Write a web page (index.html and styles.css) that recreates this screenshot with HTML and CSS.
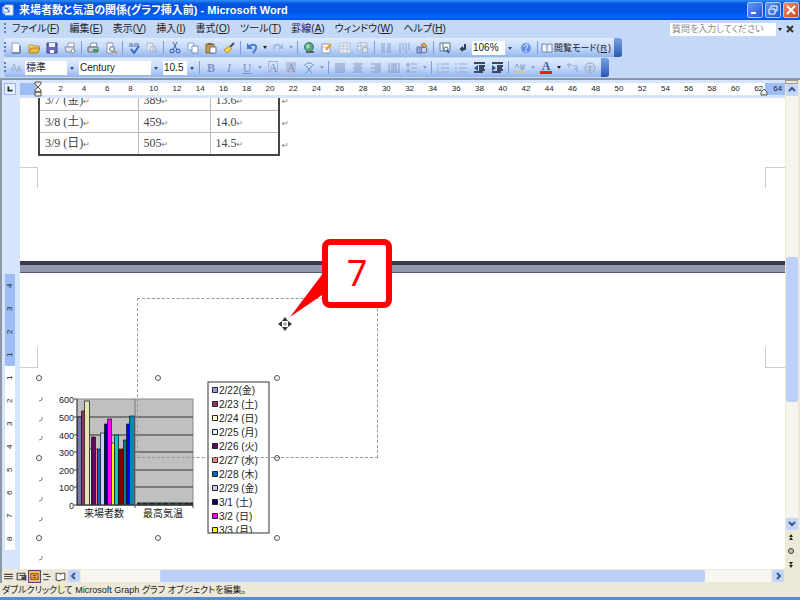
FILE: index.html
```html
<!DOCTYPE html>
<html lang="ja">
<head>
<meta charset="utf-8">
<title>来場者数と気温の関係(グラフ挿入前) - Microsoft Word</title>
<link rel="stylesheet" href="styles.css">
</head>
<body>
<svg class="sprite" aria-hidden="true">
  <symbol id="new" viewBox="0 0 12 12"><path d="M2 1h6l2 2v8H2z" fill="#fff" stroke="#8aa0cc"/><path d="M2 11h8V4" fill="none" stroke="#3d558e"/></symbol>
  <symbol id="open" viewBox="0 0 12 12"><path d="M1 10V3h4l1 1h5v2" fill="#f8d878" stroke="#b89030"/><path d="M1 11l2-5h9l-2 5z" fill="#f0bc40" stroke="#b08020"/></symbol>
  <symbol id="save" viewBox="0 0 12 12"><path d="M1 1h10v10H1z" fill="#6868c0" stroke="#40408c"/><path d="M3 1h6v4H3z" fill="#e8ecff"/><path d="M4 8h4v3H4z" fill="#fff"/></symbol>
  <symbol id="perm" viewBox="0 0 12 12"><path d="M4 1h6v4H4z" fill="#fff" stroke="#9098b0"/><path d="M1 5h9l1 5H2z" fill="#e4e6ee" stroke="#858ca4"/><circle cx="9" cy="9" r="2" fill="#f4f4fa" stroke="#858ca4"/></symbol>
  <symbol id="print" viewBox="0 0 12 12"><path d="M4 1h6l-1 4H3z" fill="#fff" stroke="#8088a0"/><path d="M1 5h10v5H1z" fill="#c8ccd8" stroke="#636b83"/><path d="M6 7h5v3H6z" fill="#38a048"/></symbol>
  <symbol id="preview" viewBox="0 0 12 12"><path d="M2 1h6v10H2z" fill="#fff" stroke="#8494b8"/><circle cx="7" cy="7" r="2.5" fill="#d8ecf8" stroke="#69758c"/><path d="M9 9l3 2" stroke="#c89038" stroke-width="2"/></symbol>
  <symbol id="spell" viewBox="0 0 12 12"><path d="M1 2h4M6 2h5M1 4h10" stroke="#5070a8"/><path d="M3 7l3 4 5-7" fill="none" stroke="#3868c0" stroke-width="2"/></symbol>
  <symbol id="research" viewBox="0 0 12 12"><path d="M1 1h6v8H1z" fill="#e4e9f3" stroke="#b0bcd0"/><circle cx="7" cy="7" r="3" fill="none" stroke="#a8b4c8"/><path d="M9 9l2 2" stroke="#a8b4c8" stroke-width="2"/></symbol>
  <symbol id="cut" viewBox="0 0 12 12"><path d="M4 0l4 8M8 0L4 8" stroke="#4464a4"/><circle cx="3" cy="9" r="2" fill="none" stroke="#3058a8"/><circle cx="9" cy="9" r="2" fill="none" stroke="#3058a8"/></symbol>
  <symbol id="copy" viewBox="0 0 12 12"><path d="M1 1h6v7H1z" fill="#f4f8ff" stroke="#87a1d0"/><path d="M5 4h6v7H5z" fill="#fff" stroke="#7090c4"/></symbol>
  <symbol id="paste" viewBox="0 0 12 12"><path d="M1 2h8v9H1z" fill="#d0983c" stroke="#8c6428"/><path d="M3 1h4v2H3z" fill="#666"/><path d="M5 5h6v6H5z" fill="#fff" stroke="#6078b0"/></symbol>
  <symbol id="brush" viewBox="0 0 12 12"><path d="M7 5l4-4" stroke="#484878" stroke-width="2"/><path d="M1 8l5-4 3 3-5 4z" fill="#f4d848" stroke="#bc9830"/></symbol>
  <symbol id="undo" viewBox="0 0 12 12"><path d="M3 5c3-4 8-2 7 1 0 2-2 3-3 5" fill="none" stroke="#4478cc" stroke-width="2"/><path d="M1 1v6h6z" fill="#4478cc"/></symbol>
  <symbol id="redo" viewBox="0 0 12 12"><path d="M9 5C6 1 1 3 2 7" fill="none" stroke="#a6b8d8" stroke-width="2"/><path d="M11 2v5H6z" fill="#a6b8d8"/></symbol>
  <symbol id="link" viewBox="0 0 12 12"><circle cx="6" cy="5" r="4.5" fill="#58a878" stroke="#357a80"/><path d="M3 3l3-1 1 3-3 2z" fill="#a8dcb0"/><path d="M3 10h4M6 10h5" stroke="#59616f" stroke-width="2"/></symbol>
  <symbol id="tables" viewBox="0 0 12 12"><path d="M1 2h8v9H1z" fill="#fff" stroke="#8497bb"/><path d="M1 5h8" stroke="#e0b050"/><path d="M5 8l5-6" stroke="#e0a030" stroke-width="2"/></symbol>
  <symbol id="table" viewBox="0 0 12 12"><path d="M1 1h10v10H1zM1 4h10M1 7h10M4 1v10M8 1v10" fill="#edf1f8" stroke="#b9c4d6"/></symbol>
  <symbol id="excel" viewBox="0 0 12 12"><path d="M1 1h9v7H1zM1 4h9M4 1v7" fill="#f2f5fa" stroke="#a8b5ca"/><circle cx="8" cy="8" r="3" fill="#d8dfe8" stroke="#9caabb"/></symbol>
  <symbol id="columns" viewBox="0 0 12 12"><path d="M1 2h4M1 4h4M1 6h4M1 8h4M1 10h4M7 2h4M7 4h4M7 6h4M7 8h4M7 10h4" stroke="#879fca"/></symbol>
  <symbol id="textdir" viewBox="0 0 12 12"><path d="M2 1v10M5 1v7M8 1v10M11 1v7" stroke="#8da2c8"/></symbol>
  <symbol id="draw" viewBox="0 0 12 12"><path d="M1 5h5v6H1z" fill="#8ea4dc" stroke="#6074aa"/><path d="M5 3l3-2 3 3-2 2z" fill="#f1b448" stroke="#8c703c"/><circle cx="8" cy="8" r="3" fill="#c8cfe6" stroke="#526796"/></symbol>
  <symbol id="map" viewBox="0 0 12 12"><path d="M1 1h10v8H1zM4 1v8" fill="#f8f6d8" stroke="#5278b8"/><circle cx="7" cy="7" r="2" fill="#fff" stroke="#3b62a3"/><path d="M8 8l2 3" stroke="#3b62a3" stroke-width="2"/></symbol>
  <symbol id="mark" viewBox="0 0 12 12"><path d="M8 2v5H4M6 5L4 7l2 2" fill="none" stroke="#333f57" stroke-width="2"/></symbol>
  <symbol id="help" viewBox="0 0 12 12"><circle cx="6" cy="6" r="5" fill="#5c8fe4" stroke="#98b8ee"/><path d="M4 5c0-3 4-3 4-1 0 1-2 1-2 3M6 8v2" fill="none" stroke="#fff"/></symbol>
  <symbol id="book" viewBox="0 0 12 12"><path d="M1 2h4l1 1 1-1h4v8H7l-1 1-1-1H1zM6 3v8" fill="#edf3fd" stroke="#7389b4"/></symbol>
  <symbol id="styles" viewBox="0 0 12 12"><path d="M1 9l3-7 3 7M2 7h4M7 10l2-6 2 6M8 8h3" fill="none" stroke="#9dafd0"/></symbol>
  <symbol id="scale" viewBox="0 0 12 12"><path d="M1 4c3-4 7-4 10 0M3 11l6-7M9 11L3 4" fill="none" stroke="#638ac8"/></symbol>
  <symbol id="just" viewBox="0 0 12 12"><path d="M1 2h10M1 4h10M1 6h10M1 8h10M1 10h10" stroke="#8299c5"/></symbol>
  <symbol id="center" viewBox="0 0 12 12"><path d="M1 2h10M3 4h6M1 6h10M3 8h6M1 10h10" stroke="#8299c5"/></symbol>
  <symbol id="right" viewBox="0 0 12 12"><path d="M1 2h10M5 4h6M1 6h10M5 8h6M1 10h10" stroke="#8299c5"/></symbol>
  <symbol id="dist" viewBox="0 0 12 12"><path d="M1 1v10M11 1v10M3 2h6M3 4h6M3 6h6M3 8h6M1 10h10" stroke="#8299c5"/></symbol>
  <symbol id="spacing" viewBox="0 0 12 12"><path d="M5 2h6M5 6h6M5 10h6M2 2v8M0 4l2-3 2 3M0 8l2 3 2-3" fill="none" stroke="#8ba1cb"/></symbol>
  <symbol id="numlist" viewBox="0 0 12 12"><path d="M1 1v3M1 5v3M1 9v3M4 2h8M4 6h8M4 10h8" stroke="#93a7cc"/></symbol>
  <symbol id="bullets" viewBox="0 0 12 12"><path d="M0 2h2M0 6h2M0 10h2M4 2h8M4 6h8M4 10h8" stroke="#93a7cc"/></symbol>
  <symbol id="outdent" viewBox="0 0 12 12"><path d="M1 1h11M6 4h6M6 6h5M6 8h6M1 10h9" stroke="#3d4862" stroke-width="2"/><path d="M5 3v6L1 6z" fill="#344f87"/></symbol>
  <symbol id="indent" viewBox="0 0 12 12"><path d="M1 1h11M6 4h6M6 6h5M6 8h6M1 10h9" stroke="#3d4862" stroke-width="2"/><path d="M1 3v6l4-3z" fill="#344f87"/></symbol>
  <symbol id="hilite" viewBox="0 0 12 12"><path d="M1 6l2-4 2 4M7 2v5h3V4H7M7 8l4-6" fill="none" stroke="#8ca0c4"/><path d="M0 9h12v2H0z" fill="#cec89c"/></symbol>
  <symbol id="ruby" viewBox="0 0 12 12"><path d="M1 3h5M3 1v5M7 4h4v6M8 7h3" fill="none" stroke="#98a9c8"/></symbol>
  <symbol id="enclose" viewBox="0 0 12 12"><circle cx="6" cy="6" r="5" fill="none" stroke="#98a7c0"/><path d="M3 5h6M6 3v7M4 8h4" stroke="#98a7c0"/></symbol>
</svg>
<div class="app">
  <header class="titlebar">
    <svg class="logo" viewBox="0 0 12 12" aria-hidden="true"><path d="M3 1h8v10H3z" fill="#fff" stroke="#a8c4f4"/><path d="M1 3h7v6H1z" fill="#3868c8" stroke="#fff"/><path d="M2 4l1 4 1-3 1 3 2-4" fill="none" stroke="#fff"/></svg>
    <h1>来場者数と気温の関係(グラフ挿入前) - Microsoft Word</h1>
    <div class="window-buttons">
      <button aria-label="最小化"><svg viewBox="0 0 12 12"><path d="M2 9h5" stroke="#fff" stroke-width="2"/></svg></button>
      <button aria-label="元に戻す"><svg viewBox="0 0 12 12"><path d="M4 4V2h6v5H8M2 5h6v5H2z" fill="none" stroke="#fff"/></svg></button>
      <button class="close" aria-label="閉じる"><svg viewBox="0 0 12 12"><path d="M2 2l8 8M10 2l-8 8" stroke="#fff" stroke-width="2"/></svg></button>
    </div>
  </header>

  <nav class="menubar">
    <span class="grip"></span>
    <button>ファイル(<u>F</u>)</button><button>編集(<u>E</u>)</button><button>表示(<u>V</u>)</button><button>挿入(<u>I</u>)</button><button>書式(<u>O</u>)</button><button>ツール(<u>T</u>)</button><button>罫線(<u>A</u>)</button><button>ウィンドウ(<u>W</u>)</button><button>ヘルプ(<u>H</u>)</button>
    <input class="question" type="text" aria-label="質問" placeholder="質問を入力してください">
    <button class="drop" aria-label="質問の履歴"></button>
    <button class="doc-close" aria-label="文書を閉じる"><svg viewBox="0 0 12 12"><path d="M3 3l6 6M9 3l-6 6" stroke="#333" stroke-width="2"/></svg></button>
  </nav>

  <div class="toolbar-row">
    <div class="toolbar">
      <span class="grip"></span>
      <button class="tool" aria-label="新規作成"><svg><use href="#new"/></svg></button>
      <button class="tool" aria-label="開く"><svg><use href="#open"/></svg></button>
      <button class="tool" aria-label="保存"><svg><use href="#save"/></svg></button>
      <button class="tool" aria-label="アクセス許可"><svg><use href="#perm"/></svg></button>
      <span class="sep"></span>
      <button class="tool" aria-label="印刷"><svg><use href="#print"/></svg></button>
      <button class="tool" aria-label="印刷プレビュー"><svg><use href="#preview"/></svg></button>
      <span class="sep"></span>
      <button class="tool" aria-label="文章校正"><svg><use href="#spell"/></svg></button>
      <button class="tool" aria-label="リサーチ"><svg><use href="#research"/></svg></button>
      <span class="sep"></span>
      <button class="tool" aria-label="切り取り"><svg><use href="#cut"/></svg></button>
      <button class="tool" aria-label="コピー"><svg><use href="#copy"/></svg></button>
      <button class="tool" aria-label="貼り付け"><svg><use href="#paste"/></svg></button>
      <button class="tool" aria-label="書式のコピー"><svg><use href="#brush"/></svg></button>
      <span class="sep"></span>
      <button class="tool" aria-label="元に戻す"><svg><use href="#undo"/></svg></button>
      <button class="drop" aria-label="元に戻す一覧"></button>
      <button class="tool" aria-label="やり直し"><svg><use href="#redo"/></svg></button>
      <button class="drop dim" aria-label="やり直し一覧"></button>
      <span class="sep"></span>
      <button class="tool" aria-label="ハイパーリンク"><svg><use href="#link"/></svg></button>
      <button class="tool" aria-label="罫線"><svg><use href="#tables"/></svg></button>
      <button class="tool" aria-label="表の挿入"><svg><use href="#table"/></svg></button>
      <button class="tool" aria-label="Excelワークシート"><svg><use href="#excel"/></svg></button>
      <span class="sep"></span>
      <button class="tool" aria-label="段組み"><svg><use href="#columns"/></svg></button>
      <button class="tool" aria-label="縦書き"><svg><use href="#textdir"/></svg></button>
      <button class="tool" aria-label="図形描画"><svg><use href="#draw"/></svg></button>
      <span class="sep"></span>
      <button class="tool" aria-label="見出しマップ"><svg><use href="#map"/></svg></button>
      <button class="tool" aria-label="編集記号"><svg><use href="#mark"/></svg></button>
      <span class="combo zoom"><select aria-label="ズーム"><option>106%</option></select></span>
      <button class="tool" aria-label="ヘルプ"><svg><use href="#help"/></svg></button>
      <span class="sep"></span>
      <button class="reading"><svg><use href="#book"/></svg>閲覧モード(<u>R</u>)</button>
      <span class="cap"></span>
    </div>
  </div>

  <div class="toolbar-row">
    <div class="toolbar">
      <span class="grip"></span>
      <button class="tool" aria-label="スタイルと書式"><svg><use href="#styles"/></svg></button>
      <span class="combo style"><select aria-label="スタイル"><option>標準</option></select></span>
      <span class="combo font"><select aria-label="フォント"><option>Century</option></select></span>
      <span class="combo size"><select aria-label="フォントサイズ"><option>10.5</option></select></span>
      <span class="sep"></span>
      <button class="tool glyph"><b>B</b></button>
      <button class="tool glyph"><i>I</i></button>
      <button class="tool glyph"><u>U</u></button>
      <button class="drop dim" aria-label="下線の種類"></button>
      <button class="tool glyph boxed"><span>A</span></button>
      <button class="tool glyph shaded"><span>A</span></button>
      <button class="tool" aria-label="文字の拡大縮小"><svg><use href="#scale"/></svg></button>
      <button class="drop dim" aria-label="倍率"></button>
      <span class="sep"></span>
      <button class="tool" aria-label="両端揃え"><svg><use href="#just"/></svg></button>
      <button class="tool" aria-label="中央揃え"><svg><use href="#center"/></svg></button>
      <button class="tool" aria-label="右揃え"><svg><use href="#right"/></svg></button>
      <button class="tool" aria-label="均等割り付け"><svg><use href="#dist"/></svg></button>
      <button class="tool" aria-label="行間"><svg><use href="#spacing"/></svg></button>
      <button class="drop dim" aria-label="行間の一覧"></button>
      <span class="sep"></span>
      <button class="tool" aria-label="段落番号"><svg><use href="#numlist"/></svg></button>
      <button class="tool" aria-label="箇条書き"><svg><use href="#bullets"/></svg></button>
      <button class="tool" aria-label="インデント解除"><svg><use href="#outdent"/></svg></button>
      <button class="tool" aria-label="インデント"><svg><use href="#indent"/></svg></button>
      <span class="sep"></span>
      <button class="tool" aria-label="蛍光ペン"><svg><use href="#hilite"/></svg></button>
      <button class="drop dim" aria-label="蛍光ペンの色"></button>
      <button class="tool glyph color"><span>A</span></button>
      <button class="drop" aria-label="フォントの色一覧"></button>
      <button class="tool" aria-label="ルビ"><svg><use href="#ruby"/></svg></button>
      <button class="tool" aria-label="囲い文字"><svg><use href="#enclose"/></svg></button>
      <span class="cap"></span>
    </div>
  </div>

  <div class="workspace">
    <div class="editor">
      <div class="ruler">
        <button class="tabstop" aria-label="タブの種類"><svg viewBox="0 0 12 12"><path d="M4 3v5h5" fill="none" stroke="#222" stroke-width="2"/></svg></button>
        <div class="ruler-track">
          <svg class="indent-mark" viewBox="0 0 8 16" aria-hidden="true"><path d="M1 1h6v2L4 6 1 3zM4 6l3 3v2H1V9zM1 11h6v4H1z" fill="#f1eee0" stroke="#555"/></svg>
          <span>2</span><span>4</span><span>6</span><span>8</span><span>10</span><span>12</span><span>14</span><span>16</span><span>18</span><span>20</span><span>22</span><span>24</span><span>26</span><span>28</span><span>30</span><span>32</span><span>34</span><span>36</span><span>38</span><span>40</span><span>42</span><span>44</span><span>46</span><span>48</span><span>50</span><span>52</span><span>54</span><span>56</span><span>58</span><span>60</span><span>62</span><span class="last">64</span>
          <svg class="right-mark" viewBox="0 0 8 8" aria-hidden="true"><path d="M4 1l3 3v3H1V4z" fill="#f1eee0" stroke="#555"/></svg>
        </div>
      </div>
      <div class="canvas">
        <div class="vruler">
          <div class="vruler-top"></div>
          <div class="vruler-margin"><span>4</span><span>3</span><span>2</span><span>1</span></div>
          <div class="vruler-body"><span>1</span><span>2</span><span>3</span><span>4</span><span>5</span><span>6</span><span>7</span><span>8</span></div>
        </div>
        <main class="document">
          <section class="page first">
            <table>
              <tr><td>3/7 (金)<i>↵</i></td><td>389<i>↵</i></td><td>13.6<i>↵</i></td><td class="out"><i>↵</i></td></tr>
              <tr><td>3/8 (土)<i>↵</i></td><td>459<i>↵</i></td><td>14.0<i>↵</i></td><td class="out"><i>↵</i></td></tr>
              <tr><td>3/9 (日)<i>↵</i></td><td>505<i>↵</i></td><td>14.5<i>↵</i></td><td class="out"><i>↵</i></td></tr>
            </table>
            <div class="corners bottom"><span></span><span></span></div>
          </section>
          <div class="page-gap"></div>
          <section class="page second">
            <div class="corners top"><span></span><span></span></div>
            <svg class="chart" viewBox="0 0 250 192" role="img" aria-label="来場者数と最高気温のグラフ">
              <rect x="43" y="27" width="116" height="106" fill="#c0c0c0" stroke="#888"/>
              <path d="M43 45h116M43 63h116M43 80h116M43 98h116M43 115h116" stroke="#333"/>
              <g stroke="#111" stroke-width=".7">
                <path d="M43.5 133V45h4v88z" fill="#7474b8"/><path d="M47.500 133V39h3v94z" fill="#993366"/>
                <path d="M50.500 133V29h5v104z" fill="#e8e4b4"/><path d="M55.500 133V77h2v56z" fill="#ccffff"/>
                <path d="M57.500 133V65h4v68z" fill="#660066"/><path d="M61.500 133V77h2v56z" fill="#ff8080"/>
                <path d="M63.500 133V77h3v56z" fill="#0066cc"/><path d="M66.500 133V61h4v72z" fill="#ccccff"/>
                <path d="M70.500 133V52h3v81z" fill="#000080"/><path d="M73.500 133V47h4v86z" fill="#ff00ff"/>
                <path d="M77.500 133V71h3v62z" fill="#ffff00"/><path d="M80.500 133V63h4v70z" fill="#00cccc"/>
                <path d="M84.500 133V77h5v56z" fill="#800000"/><path d="M89.500 133V68h3v65z" fill="#008080"/>
                <path d="M92.500 133V52h3v81z" fill="#0000ff"/><path d="M95.500 133V44h5v89z" fill="#0088b8"/>
              </g>
              <path d="M101 27v106" stroke="#777"/>
              <path d="M103 132h56" stroke="#222" stroke-width="3"/><path d="M106 132h50" stroke="#18858c" stroke-width="1" stroke-dasharray="3 4"/>
              <path d="M43 27v107M40 27h3M40 45h3M40 63h3M40 80h3M40 98h3M40 115h3M40 133h119v3M101 133v3" fill="none" stroke="#444"/>
              <g class="axis"><text x="40" y="31">600</text><text x="40" y="49">500</text><text x="40" y="67">400</text><text x="40" y="84">300</text><text x="40" y="102">200</text><text x="40" y="119">100</text><text x="40" y="137">0</text></g>
              <g class="category"><text x="70" y="145">来場者数</text><text x="129" y="145">最高気温</text></g>
              <rect x="174" y="10" width="61" height="151" fill="#fff" stroke="#333"/>
              <svg x="174" y="10" width="61" height="151">
                <g stroke="#222"><path d="M4.500 5.500h5v5h-5z" fill="#9999ff"/><path d="M4.500 19.500h5v5h-5z" fill="#993366"/><path d="M4.500 33.500h5v5h-5z" fill="#ffffcc"/><path d="M4.500 47.500h5v5h-5z" fill="#ccffff"/><path d="M4.500 61.500h5v5h-5z" fill="#660066"/><path d="M4.500 75.500h5v5h-5z" fill="#ff8080"/><path d="M4.500 89.500h5v5h-5z" fill="#0066cc"/><path d="M4.500 103.500h5v5h-5z" fill="#ccccff"/><path d="M4.500 117.500h5v5h-5z" fill="#000080"/><path d="M4.500 131.500h5v5h-5z" fill="#ff00ff"/><path d="M4.500 145.500h5v5h-5z" fill="#ffff00"/></g>
                <g class="legend"><text x="11" y="12">2/22(金)</text><text x="11" y="26">2/23 (土)</text><text x="11" y="40">2/24 (日)</text><text x="11" y="54">2/25 (月)</text><text x="11" y="68">2/26 (火)</text><text x="11" y="82">2/27 (水)</text><text x="11" y="96">2/28 (木)</text><text x="11" y="110">2/29 (金)</text><text x="11" y="124">3/1 (土)</text><text x="11" y="138">3/2 (日)</text><text x="11" y="152">3/3 (月)</text></g>
              </svg>
              <g fill="none" stroke="#888"><path d="M8 25v3l-3 1M8 45v3l-3 1M8 64v3l-3 1M8 105v3l-3 1M8 125v3l-3 1M8 145v3l-3 1M8 184v3l-3 1"/></g>
              <g fill="#fff" stroke="#555"><circle cx="5" cy="6" r="2.500"/><circle cx="124" cy="6" r="2.500"/><circle cx="243" cy="6" r="2.500"/><circle cx="5" cy="86" r="2.500"/><circle cx="243" cy="86" r="2.500"/><circle cx="5" cy="166" r="2.500"/><circle cx="124" cy="166" r="2.500"/><circle cx="243" cy="166" r="2.500"/></g>
            </svg>
            <div class="drag-outline"></div>
            <svg class="move-cursor" viewBox="0 0 14 14" aria-hidden="true"><path d="M7 0l3 4H4zM7 14l3-4H4zM0 7l4-3v6zM14 7l-4-3v6z" fill="#333"/><path d="M7 5v4M5 7h4" stroke="#888"/></svg>
            <div class="callout"><svg viewBox="0 0 40 50" aria-hidden="true"><path d="M34 1L0 46l38-26z" fill="#f00"/></svg><strong>7</strong></div>
          </section>
        </main>
      </div>
      <div class="hbar">
        <button class="view" aria-label="下書き"><svg viewBox="0 0 12 12"><path d="M2 4h8M2 6h8M2 8h8" stroke="#444"/></svg></button>
        <button class="view" aria-label="Webレイアウト"><svg viewBox="0 0 12 12"><path d="M2 3h7v6H2zM4 5h6v5" fill="none" stroke="#444"/><path d="M6 6h3v3H6z" fill="#444"/></svg></button>
        <button class="view active" aria-label="印刷レイアウト"><svg viewBox="0 0 12 12"><path d="M2 3h8v6H2zM4 5h4M4 7h4" fill="none" stroke="#704020"/></svg></button>
        <button class="view" aria-label="アウトライン"><svg viewBox="0 0 12 12"><path d="M2 4h5M5 6h4M2 9h5" stroke="#444"/></svg></button>
        <button class="view" aria-label="閲覧"><svg viewBox="0 0 12 12"><path d="M2 3h3l1 1 1-1h3v6H7l-2 1-3-1z" fill="#fff" stroke="#555"/></svg></button>
        <button class="arrow" aria-label="左へ"><svg viewBox="0 0 12 12"><path d="M7 3L4 6l3 3" fill="none" stroke="#405888" stroke-width="2"/></svg></button>
        <div class="htrack"><span class="hthumb"></span></div>
        <button class="arrow" aria-label="右へ"><svg viewBox="0 0 12 12"><path d="M5 3l3 3-3 3" fill="none" stroke="#405888" stroke-width="2"/></svg></button>
      </div>
    </div>
    <div class="vbar">
      <span class="split"></span>
      <button class="arrow" aria-label="上へ"><svg viewBox="0 0 12 12"><path d="M3 7l3-3 3 3" fill="none" stroke="#405888" stroke-width="2"/></svg></button>
      <div class="vtrack"><span class="vthumb"></span></div>
      <button class="arrow" aria-label="下へ"><svg viewBox="0 0 12 12"><path d="M3 4l3 3 3-3" fill="none" stroke="#405888" stroke-width="2"/></svg></button>
      <button class="browse" aria-label="前のページ"><svg viewBox="0 0 12 12"><path d="M6 3l2 3H4zM6 6l2 3H4z" fill="#222"/></svg></button>
      <button class="browse" aria-label="オブジェクトの選択"><svg viewBox="0 0 12 12"><circle cx="6" cy="6" r="2.500" fill="#bbb" stroke="#444"/></svg></button>
      <button class="browse" aria-label="次のページ"><svg viewBox="0 0 12 12"><path d="M4 3h4L6 6zM4 6h4L6 9z" fill="#222"/></svg></button>
    </div>
  </div>
  <footer class="status">ダブルクリックして Microsoft Graph グラフ オブジェクトを編集。</footer>
</div>
</body>
</html>
```
FILE: styles.css
```css
* { box-sizing: border-box; }
body {
  margin: 0;
  font-family: "Liberation Sans", "Noto Sans CJK JP", sans-serif;
  font-size: 10px;
  color: #222;
}
button, input, select { font: inherit; font-feature-settings: inherit; color: inherit; }
button { border: 0; padding: 0; background: none; }
.sprite { display: none; }
.app { display: flex; flex-direction: column; height: 100vh; overflow: hidden; background: #c4d8f8; border-bottom: 3px solid #4f8fd4; }

.titlebar {
  display: flex; align-items: center; gap: 5px; height: 20px; padding: 0 1px 0 2px; flex: none;
  background: linear-gradient(#2f8cf8, #0450dc 4px, #0455e6 12px, #0068fc 17px, #0250dc);
  color: #fff;
}
.logo { width: 12px; height: 12px; }
h1 { margin: 0; flex: 1; font-size: 11px; line-height: 16px; font-weight: bold; white-space: nowrap; font-feature-settings: "palt"; }
.window-buttons { display: flex; gap: 2px; }
.window-buttons button { width: 16px; height: 16px; border: 1px solid #a9c6f8; border-radius: 2px; background: linear-gradient(135deg, #6498f4, #2057d8); display: grid; place-items: center; }
.window-buttons .close { background: linear-gradient(135deg, #f08a68, #d04820); }
.window-buttons svg { width: 12px; height: 12px; }

.menubar { display: flex; align-items: center; height: 18px; padding-left: 4px; flex: none; font-feature-settings: "palt"; }
.menubar > button:not(.drop):not(.doc-close) { padding: 0 5px; line-height: 16px; white-space: nowrap; }
.grip { width: 3px; height: 12px; background: repeating-linear-gradient(#5f7fbd 0 2px, transparent 2px 4px); background-size: 2px 100%; background-repeat: no-repeat; }
.question { margin-left: auto; width: 106px; height: 13px; border: 0; padding: 0 2px; background: #fff; font-size: 9px; }
.question::placeholder { color: #888; opacity: 1; }
.doc-close { width: 16px; height: 12px; }
.doc-close svg { width: 12px; height: 12px; display: block; }
.drop { width: 8px; height: 16px; display: grid; place-items: center; flex: none; }
.drop::before { content: ""; border: 2px solid transparent; border-top: 3px solid #222; border-bottom: 0; }
.drop.dim::before { border-top-color: #8a9cc0; }

.toolbar-row { display: flex; height: 20px; flex: none; padding-left: 4px; }
.toolbar { display: flex; align-items: center; height: 19px; border-radius: 3px; background: linear-gradient(#e0ecfe, #c6dafa 50%, #94b6ee); }
.tool { width: 18px; height: 18px; display: grid; place-items: center; flex: none; }
.tool svg, .reading svg { width: 12px; height: 12px; }
.sep { width: 1px; height: 13px; margin: 0 2px; background: #7c9cd8; }
.combo { position: relative; display: flex; height: 14px; padding-right: 10px; margin-right: 2px; background: linear-gradient(90deg, #fff calc(100% - 10px), transparent calc(100% - 10px)); }
.combo::after { content: ""; position: absolute; right: 3px; top: 6px; border: 2px solid transparent; border-top: 3px solid #334b80; border-bottom: 0; }
.combo select { appearance: none; border: 0; padding: 0 1px; width: 100%; background: transparent; line-height: 14px; }
.zoom { width: 43px; }
.style { width: 52px; }
.font { width: 82px; }
.size { width: 34px; margin-right: 0; }
.reading { display: flex; align-items: center; gap: 1px; white-space: nowrap; padding: 0 1px; line-height: 16px; font-size: 9px; font-feature-settings: "palt"; }
.cap { width: 8px; height: 19px; margin-left: 2px; border-radius: 0 3px 3px 0; background: linear-gradient(#79a2e8, #2858b0); }
.glyph { font-family: "Liberation Serif", serif; font-size: 12px; line-height: 12px; color: #7891c4; }
.boxed span { border: 1px solid #a4b6d8; }
.shaded span { background: #b4c1d8; padding: 0 1px; }
.color span { color: #385eaa; border-bottom: 3px solid #f01818; padding: 0 2px; line-height: 10px; font-weight: bold; }

.workspace { display: flex; flex: 1; min-height: 0; border-top: 2px solid #8996a8; }
.editor { display: flex; flex-direction: column; flex: 1; min-width: 0; border-left: 2px solid #8c98a8; }
.ruler { display: flex; height: 18px; flex: none; background: #d6e5fc; padding-top: 3px; }
.tabstop { width: 12px; height: 12px; margin: 0 4px 0 2px; border: 1px solid #9bb6e4; background: #e6effe; }
.tabstop svg { display: block; width: 10px; height: 10px; }
.ruler-track { position: relative; flex: 1; display: flex; height: 12px; padding-left: 29px; font-size: 8px; line-height: 12px; text-align: center; background: linear-gradient(90deg, #9dbdf6 18px, #fff 18px calc(100% - 20px), #9dbdf6 calc(100% - 20px)); }
.ruler-track span { flex: 1; min-width: 0; }
.ruler-track .last { flex: none; width: 15px; }
.indent-mark { position: absolute; left: 14px; top: -2px; width: 8px; height: 16px; }
.right-mark { position: absolute; right: 17px; top: 5px; width: 8px; height: 8px; }

.canvas { display: flex; flex: 1; min-height: 0; }
.vruler { width: 18px; flex: none; padding: 0 5px 0 3px; background: #d6e5fc; overflow: hidden; font-size: 8px; line-height: 10px; text-align: center; }
.vruler-top { height: 176px; }
.vruler-margin { height: 92px; background: #9dbdf6; }
.vruler-body { background: #fff; }
.vruler span { display: grid; place-items: center; height: 23px; writing-mode: vertical-rl; transform: rotate(180deg); }
.document { flex: 1; min-width: 0; display: flex; flex-direction: column; background: #fff; }
.first { overflow: hidden; flex: none; }
table { margin: -10px 0 0 18px; border-collapse: collapse; font-family: "Liberation Serif", "Noto Sans CJK JP", serif; font-size: 12px; line-height: 16px; color: #444; }
td { height: 22px; padding: 0 5px; border: 1px solid #bbb; white-space: nowrap; }
td:nth-child(1) { width: 99px; border-left: 2px solid #444; }
td:nth-child(2) { width: 72px; }
td:nth-child(3) { width: 69px; border-right: 2px solid #444; }
tr:last-child td:not(.out) { border-bottom: 2px solid #444; }
td.out { border-width: 0 0 0 2px; padding: 0 2px; }
td i { font: 8px "DejaVu Sans", sans-serif; color: #777; }
.corners { display: flex; justify-content: space-between; }
.corners span { width: 18px; height: 21px; border: 0 solid #ccc; }
.corners span:first-child { border-right-width: 1px; }
.corners span:last-child { width: 20px; border-left-width: 1px; }
.bottom { padding: 11px 0 73px; }
.bottom span { border-top-width: 1px; }
.top { padding-top: 74px; }
.top span { border-bottom-width: 1px; }
.page-gap { height: 12px; flex: none; background: #9199b0; border-top: 4px solid #3a3c48; border-bottom: 1px solid #555b6c; }
.second { position: relative; flex: 1; min-height: 0; }
.chart { display: block; width: 250px; height: 192px; margin: 4px 0 0 14px; }
.chart text { fill: #222; }
.axis { font-size: 9px; text-anchor: end; }
.category { font-size: 10px; text-anchor: middle; }
.legend { font-size: 10px; }
.drag-outline { position: absolute; left: 117px; top: 25px; width: 241px; height: 160px; border: 1px dashed #999; }
.move-cursor { position: absolute; left: 258px; top: 44px; width: 14px; height: 14px; }
.callout { position: absolute; left: 302px; top: -34px; width: 70px; height: 69px; display: grid; place-items: center; border: 6px solid #f00; border-radius: 8px; background: #fff; }
.callout svg { position: absolute; left: -38px; top: 26px; width: 40px; height: 50px; clip-path: inset(0 4px 0 0); }
.callout strong { font: 400 36px/40px "Noto Sans", sans-serif; color: #f00; }

.hbar { display: flex; align-items: center; height: 14px; flex: none; background: #ece9d8; }
.view { width: 13px; height: 13px; flex: none; }
.view svg { display: block; width: 100%; height: 100%; }
.view.active { background: #f4b568; border: 1px solid #584878; }
.arrow { width: 12px; height: 12px; flex: none; border-radius: 2px; background: #c2d5fb; }
.arrow svg { display: block; width: 12px; height: 12px; }
.hbar .arrow { margin: 0 1px; }
.htrack { flex: 1; height: 12px; display: flex; background: #f7f6f0; }
.hthumb { margin: 0 66px 0 79px; flex: 1; border-radius: 2px; background: #bccffa; }
.vbar { width: 15px; flex: none; display: flex; flex-direction: column; align-items: center; background: #ece9d8; padding-right: 2px; }
.split { width: 13px; height: 4px; border: 1px solid #a19d8c; background: #ece9d8; }
.vtrack { flex: 1; width: 12px; display: flex; background: #f5f4ed; }
.vthumb { flex: 1; margin: 161px 0 116px; border-radius: 2px; background: #bdd0fa; }
.browse { width: 13px; height: 13px; margin-bottom: 1px; }
.browse svg { display: block; width: 12px; height: 12px; }
.vbar .browse:last-child { margin-bottom: 12px; }
.status { height: 14px; flex: none; padding-left: 2px; background: #ece9d8; font-size: 9px; line-height: 14px; white-space: nowrap; font-feature-settings: "palt"; }
```
